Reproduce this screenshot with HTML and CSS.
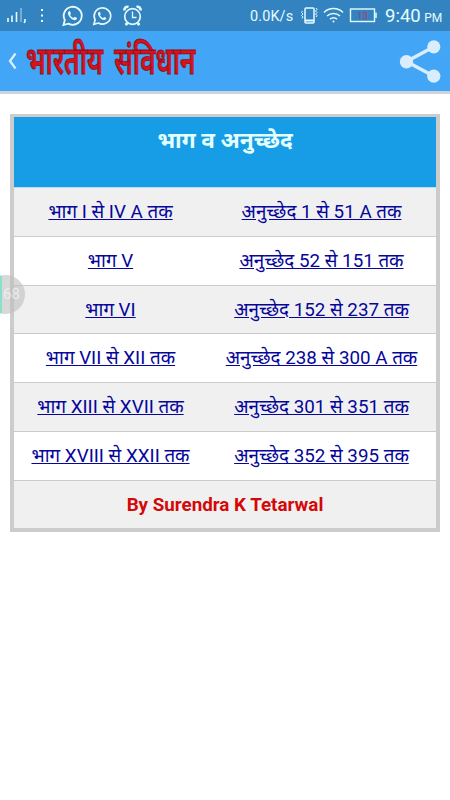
FILE: index.html
```html
<!DOCTYPE html>
<html lang="hi">

<head>
    <meta charset="UTF-8">
    <meta name="viewport" content="width=device-width, initial-scale=1.0">
    <title>भारतीय संविधान</title>
    <link rel="stylesheet" href="styles.css">
</head>

<body>
    <!-- status bar -->
    <div class="status">
        <svg class="status-left" width="150" height="31" viewBox="0 0 150 31" fill="none" stroke="#e5fcff">
            <g stroke-width="1.6">
                <path d="M8 18v4M12 15.500v6.500M16.500 12v10" />
                <path d="M21 8v14" opacity=".45" />
                <path d="M25 19v2l-.8 2" />
            </g>
            <path d="M42 9v2M42 14.500v2M42 20v2" stroke-width="2" />
            <g id="chat">
                <path d="M63.500 25l1.300-5a9 9 0 1 1 3.500 3.600z" stroke-width="1.8" />
                <path d="M69 11.200c-1.700 1-1.300 3.100.3 5.400 2.500 3.400 5.300 4.500 7.300 2.700.6-.6.500-1.200-.1-1.600l-1.700-.9-1.500 1.200c-1.600-.8-2.600-1.800-3.200-3l.8-1.200-.8-2.200c-.2-.5-.7-.6-1.100-.4z" fill="#e5fcff" stroke="none" />
            </g>
            <use href="#chat" transform="translate(35.500 1.800) scale(.92 .9)" />
            <circle cx="132.500" cy="16.500" r="7.800" stroke-width="1.700" />
            <path d="M132.500 11.500v6h4" stroke-width="1.300" />
            <path d="M124.500 10.500a3 3 0 0 1 4-3.500M136.500 7a3 3 0 0 1 4 3.500M127.500 23l-2 2M137.500 23l2 2" stroke-width="2.600" />
        </svg>
        <span class="speed">0.0K/s</span>
        <svg class="status-right" width="80" height="31" viewBox="300 0 80 31" fill="none" stroke="#e5fcff">
            <rect x="305" y="8" width="9" height="15" rx="1" stroke-width="1.500" />
            <path d="M305 20.500h9" stroke-width="2" />
            <path d="M302.500 11l-1 1.500 1.500 1.500-1.500 1.500 1.500 1.500-1 1.500M316 8l1 1.500-1.500 1.500 1.500 1.500-1.500 1.500 1.500 1.500-1 1.500" />
            <path d="M324 12.500a13.500 13.500 0 0 1 19 0M327 16a9.500 9.500 0 0 1 13 0M330 19.200a5.500 5.500 0 0 1 7 0" stroke-width="1.500" />
            <circle cx="333.500" cy="21.500" r="1" fill="#e5fcff" stroke="none" />
            <rect x="350.500" y="9" width="24" height="12.500" stroke-width="1.400" />
            <path d="M376 12.500v5.500" stroke-width="1.500" />
            <text class="battery" x="357.300" y="18.800">13</text>
        </svg>
        <span class="clock">9:40 <small>PM</small></span>
    </div>

    <!-- app bar -->
    <div class="toolbar">
        <svg class="back" width="10" height="18" viewBox="0 0 10 18">
            <path d="M8.500 1.500L3 9l5.500 7.500" fill="none" stroke="#d9f2ff" stroke-width="2.200" />
        </svg>
        <h1 class="logo">भारतीय संविधान</h1>
        <svg class="share" width="42" height="44" viewBox="0 0 42 44">
            <path d="M34.500 8L7.500 22.500 34.500 37" fill="none" stroke="#d9edff" stroke-width="3.500" />
            <g fill="#d9edff">
                <circle cx="34.800" cy="7.800" r="6.600" />
                <circle cx="7.500" cy="22.700" r="6.700" />
                <circle cx="34.800" cy="37.200" r="6.600" />
            </g>
        </svg>
    </div>

    <div class="list">
        <div class="list-head">भाग व अनुच्छेद</div>
        <div class="row"><a href="#">भाग I से IV A तक</a><a href="#">अनुच्छेद 1 से 51 A तक</a></div>
        <div class="row"><a href="#">भाग V</a><a href="#">अनुच्छेद 52 से 151 तक</a></div>
        <div class="row"><a href="#">भाग VI</a><a href="#">अनुच्छेद 152 से 237 तक</a></div>
        <div class="row"><a href="#">भाग VII से XII तक</a><a href="#">अनुच्छेद 238 से 300 A तक</a></div>
        <div class="row"><a href="#">भाग XIII से XVII तक</a><a href="#">अनुच्छेद 301 से 351 तक</a></div>
        <div class="row"><a href="#">भाग XVIII से XXII तक</a><a href="#">अनुच्छेद 352 से 395 तक</a></div>
        <div class="row author">By Surendra K Tetarwal</div>
    </div>

    <!-- floating bubble -->
    <div class="bubble">68</div>
</body>

</html>
```
FILE: styles.css
```css
* {
    box-sizing: border-box;
}

body {
    margin: 0;
    height: 800px;
    overflow: hidden;
    position: relative;
    background: #fff;
    font-family: Roboto, "Noto Sans", "Noto Sans Devanagari", sans-serif;
}

svg {
    display: block;
    flex: none;
}

.status {
    display: flex;
    height: 31px;
    line-height: 33px;
    background: #3383c1;
    color: #e5fcff;
    white-space: nowrap;
}

.speed {
    width: 50px;
    margin-left: 100px;
    font-size: 14.5px;
    letter-spacing: 0.1px;
}

.battery {
    fill: #b8365f;
    stroke: none;
    font-size: 9.5px;
}

.clock {
    margin-left: 5px;
    font-size: 18.5px;
}

.clock small {
    font-size: 12px;
    margin-left: -1px;
}

.toolbar {
    display: flex;
    align-items: center;
    height: 63px;
    padding: 0 9px 0 7px;
    background: #42a5f5;
    border-bottom: 3px solid #ccd3d9;
}

.logo {
    width: 170px;
    margin: 0 auto 0 9px;
    font-size: 38px;
    line-height: 56px;
    font-weight: 600;
    white-space: nowrap;
    word-spacing: 7px;
    color: #dc1018;
    -webkit-text-stroke: 0.9px #8c1020;
    transform: scaleX(0.685);
    transform-origin: left;
}

.list {
    width: 430px;
    height: 418px;
    margin: 20px 0 0 10px;
    border: 4px solid #ccc;
    border-top-width: 3px;
    overflow: hidden;
    font-size: 18.8px;
}

.list-head {
    height: 71px;
    padding-top: 10px;
    background: #169de6;
    border-bottom: 1px solid #b4dff5;
    color: #e4ffff;
    font-size: 22.6px;
    line-height: 27px;
    font-weight: 700;
    text-align: center;
}

.row {
    display: grid;
    grid-template-columns: 193px 229px;
    height: 48.75px;
    line-height: 49px;
    text-align: center;
    white-space: nowrap;
    border-bottom: 1px solid #ccc;
}

.row:nth-child(even) {
    background: #f0f0f0;
}

.row a {
    justify-self: center;
    color: #06069a;
}

.author {
    display: block;
    border-bottom: 0;
    color: #d40808;
    font-weight: 700;
}

.bubble {
    position: absolute;
    left: -14px;
    top: 275px;
    width: 39px;
    height: 39px;
    padding-left: 17px;
    border-radius: 50%;
    background: linear-gradient(90deg, rgba(95, 215, 185, 0.75) 16px, rgba(190, 190, 190, 0.6) 16px);
    color: rgba(255, 255, 255, 0.6);
    font-size: 15px;
    line-height: 39px;
}
```
